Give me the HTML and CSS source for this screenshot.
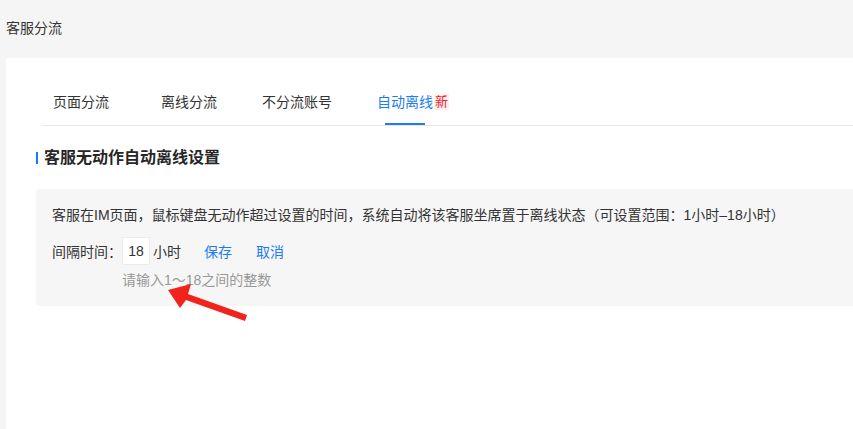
FILE: index.html
```html
<!DOCTYPE html>
<html lang="zh-CN">
<head>
<meta charset="utf-8">
<title>客服分流</title>
<link rel="stylesheet" href="styles.css">
</head>
<body>
<header class="page-header">客服分流</header>
<main class="card">
  <nav class="tabs">
    <div class="tab-list">
      <div class="tab">页面分流</div>
      <div class="tab">离线分流</div>
      <div class="tab">不分流账号</div>
      <div class="tab active">自动离线<span class="badge">新</span></div>
    </div>
  </nav>
  <section class="section">
    <h2 class="section-title">客服无动作自动离线设置</h2>
    <div class="panel">
      <p class="desc">客服在IM页面，鼠标键盘无动作超过设置的时间，系统自动将该客服坐席置于离线状态（可设置范围：1小时–18小时）</p>
      <div class="row">
        <span class="label">间隔时间：</span>
        <input class="num" type="text" value="18">
        <span class="unit">小时</span>
        <a class="link save">保存</a>
        <a class="link">取消</a>
      </div>
      <div class="hint">请输入1～18之间的整数</div>
    </div>
  </section>
  <svg class="arrow" width="90" height="42" viewBox="160 282 90 42" aria-hidden="true">
    <polygon points="168,290 191,284 188,294 247,315 245,321 186,300 180,308" fill="#f2231c"/>
  </svg>
</main>
</body>
</html>
```

FILE: styles.css
```css
* { box-sizing: border-box; }
html, body {
  margin: 0;
  padding: 0;
}
body {
  background: #f5f5f5;
  font-family: "Liberation Sans", "Noto Sans CJK SC", sans-serif;
  font-size: 14px;
  color: #333;
  overflow: hidden;
  height: 429px;
}
.page-header {
  height: 58px;
  padding: 17px 0 0 6px;
  line-height: 22px;
  color: #333;
}
.card {
  position: relative;
  margin-left: 6px;
  background: #fff;
  height: 371px;
}
.tabs {
  margin-left: 36px;
  padding-top: 33px;
  border-bottom: 1px solid #e8e8e8;
}
.tab-list {
  display: flex;
  margin-left: -15px;
}
.tab {
  position: relative;
  width: 108px;
  text-align: center;
  line-height: 22px;
  padding-bottom: 12px;
  color: #333;
}
.tab.active {
  color: #1a7cf2;
}
.tab.active::after {
  content: "";
  position: absolute;
  left: 50%;
  bottom: 0;
  width: 40px;
  height: 2px;
  margin-left: -20px;
  background: #1a7cf2;
}
.badge {
  position: absolute;
  left: 83px;
  top: 3px;
  font-size: 13px;
  line-height: 16px;
  padding: 0 1px;
  color: #f5222d;
  background: #fff0f0;
}
.section {
  padding-left: 30px;
}
.section-title {
  display: flex;
  align-items: center;
  margin: 20px 0 19px;
  font-size: 16px;
  line-height: 24px;
  font-weight: 600;
  color: #262626;
}
.section-title::before {
  content: "";
  width: 2px;
  height: 12px;
  margin-right: 6px;
  background: #1a7cf2;
}
.panel {
  background: #f6f6f6;
  border-radius: 3px 0 0 3px;
  padding: 16px 0 15px 16px;
  white-space: nowrap;
}
.desc {
  margin: 0 0 11px;
  line-height: 21px;
  color: #333;
}
.row {
  display: flex;
  align-items: center;
  height: 28px;
}
.label {
  width: 70px;
}
.num {
  width: 28px;
  height: 28px;
  border: 1px solid #ececec;
  border-radius: 2px;
  background: #fff;
  font: inherit;
  color: #333;
  text-align: center;
  padding: 0;
  margin: 0 3px 0 0;
}
.unit {
  margin-right: 23px;
}
.link {
  color: #1a7cf2;
  cursor: pointer;
}
.save {
  margin-right: 24px;
}
.hint {
  margin: 5px 0 0 70px;
  line-height: 21px;
  color: #999;
}
.arrow {
  position: absolute;
  left: 154px;
  top: 224px;
}
```
